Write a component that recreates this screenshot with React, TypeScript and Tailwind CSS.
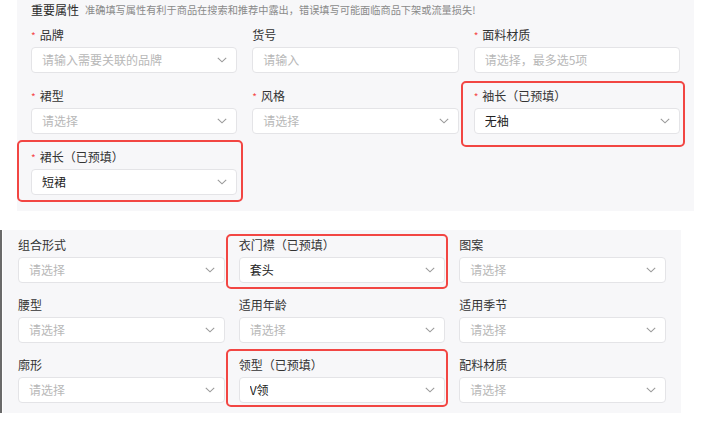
import React from "react";

type FieldProps = {
  label: string;
  required?: boolean;
  value?: string;
  placeholder?: string;
  chevron?: boolean;
  box?: string;
};

function Chevron() {
  return (
    <svg width="10" height="6" viewBox="0 0 10 6" className="shrink-0">
      <polyline points="0.8,0.8 5,4.8 9.2,0.8" fill="none" stroke="#9a9a9a" strokeWidth="1.1" />
    </svg>
  );
}

function Field({ label, required, value, placeholder, chevron = true, box }: FieldProps) {
  return (
    <div className="relative flex flex-col">
      {box && <div className={"absolute border-[2.5px] border-[#f24643] rounded-[5px] pointer-events-none " + box} />}
      <div className="h-[18px] flex items-center text-[12px] leading-[18px] text-[#333]">
        {required && <span className="text-[#f5484a] text-[10px] mr-[4px] mt-[1px]">*</span>}
        <span>{label}</span>
      </div>
      <div className="mt-[3px] h-[26px] bg-white border border-[#e4e4e7] rounded-[4px] flex items-center pl-[10px] pr-[9px]">
        <span className={"flex-1 text-[12px] truncate " + (value ? "text-[#222]" : "text-[#b8b8b8]")}>
          {value ?? placeholder}
        </span>
        {chevron && <Chevron />}
      </div>
    </div>
  );
}

export default function App() {
  return (
    <div
      className="w-[710px] h-[435px] bg-white overflow-hidden"
      style={{ fontFamily: '"Noto Sans CJK SC", "Noto Sans", sans-serif' }}
    >
      <div className="ml-[17px] w-[677px] bg-[#f7f7f9] pl-[14px] pr-[14px] pt-[3px] pb-[16px]">
        <div className="h-[14px] flex items-center gap-[6px]">
          <span className="text-[12px] text-[#2a2a2a]">重要属性</span>
          <span className="text-[10.2px] text-[#8a8a8a]">准确填写属性有利于商品在搜索和推荐中露出，错误填写可能面临商品下架或流量损失!</span>
        </div>
        <div className="mt-[9px] grid grid-cols-3 gap-x-[15px] gap-y-[14px]">
          <Field label="品牌" required placeholder="请输入需要关联的品牌" />
          <Field label="货号" placeholder="请输入" chevron={false} />
          <Field label="面料材质" required placeholder="请选择，最多选5项" chevron={false} />
          <Field label="裙型" required placeholder="请选择" />
          <Field label="风格" required placeholder="请选择" />
          <Field
            label="袖长（已预填）"
            required
            value="无袖"
            box="left-[-13px] right-[-5px] top-[-6px] bottom-[-13px]"
          />
          <Field
            label="裙长（已预填）"
            required
            value="短裙"
            box="left-[-14px] right-[-6px] top-[-8px] bottom-[-7px]"
          />
        </div>
      </div>

      <div className="mt-[19px] flex">
        <div className="w-[2px] bg-[#6a6a6a]" />
        <div className="ml-[1px] w-[678px] bg-[#f7f7f9] pl-[15px] pr-[15px] pt-[6px] pb-[10px]">
          <div className="grid grid-cols-3 gap-x-[14px] gap-y-[13px]">
            <Field label="组合形式" placeholder="请选择" />
            <Field
              label="衣门襟（已预填）"
              value="套头"
              box="left-[-13px] right-[-3px] top-[-2px] bottom-[-6px]"
            />
            <Field label="图案" placeholder="请选择" />
            <Field label="腰型" placeholder="请选择" />
            <Field label="适用年龄" placeholder="请选择" />
            <Field label="适用季节" placeholder="请选择" />
            <Field label="廓形" placeholder="请选择" />
            <Field
              label="领型（已预填）"
              value="V领"
              box="left-[-13px] right-[-3px] top-[-7px] bottom-[-4px]"
            />
            <Field label="配料材质" placeholder="请选择" />
          </div>
        </div>
      </div>
    </div>
  );
}
